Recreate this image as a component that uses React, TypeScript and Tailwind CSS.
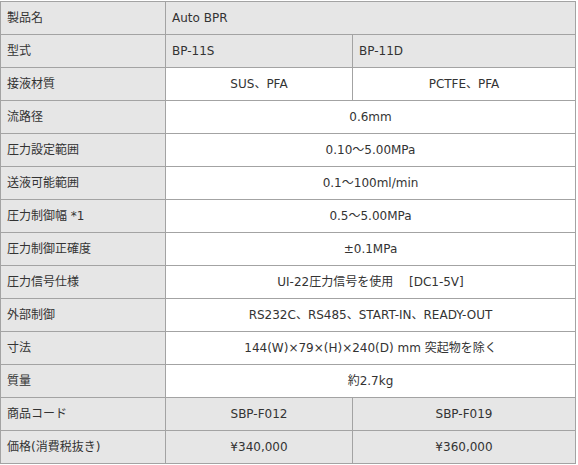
type SpecRow = {
  label: string;
  values: string[];
  gray?: boolean;
  align?: "left" | "center";
};

const rows: SpecRow[] = [
  { label: "製品名", values: ["Auto BPR"], gray: true, align: "left" },
  { label: "型式", values: ["BP-11S", "BP-11D"], gray: true, align: "left" },
  { label: "接液材質", values: ["SUS、PFA", "PCTFE、PFA"] },
  { label: "流路径", values: ["0.6mm"] },
  { label: "圧力設定範囲", values: ["0.10～5.00MPa"] },
  { label: "送液可能範囲", values: ["0.1～100ml/min"] },
  { label: "圧力制御幅 *1", values: ["0.5～5.00MPa"] },
  { label: "圧力制御正確度", values: ["±0.1MPa"] },
  { label: "圧力信号仕様", values: ["UI-22圧力信号を使用　 [DC1-5V]"] },
  { label: "外部制御", values: ["RS232C、RS485、START-IN、READY-OUT"] },
  { label: "寸法", values: ["144(W)×79×(H)×240(D) mm 突起物を除く"] },
  { label: "質量", values: ["約2.7kg"] },
  { label: "商品コード", values: ["SBP-F012", "SBP-F019"], gray: true },
  { label: "価格(消費税抜き)", values: ["¥340,000", "¥360,000"], gray: true },
];

export default function App() {
  return (
    <div className="min-h-screen bg-white pt-px font-['DejaVu_Sans','Noto_Sans_CJK_JP',sans-serif] text-[12px] text-[#333333]">
      <div className="grid w-[576px] grid-cols-[164px_186px_222px] gap-px bg-[#a3a3a3] p-px">
        {rows.map((row) => (
          <div key={row.label} className="contents">
            <div className="flex h-[32px] items-center bg-[#e6e6e6] px-[6px]">
              {row.label}
            </div>
            {row.values.map((value, i) => (
              <div
                key={i}
                className={`flex h-[32px] items-center whitespace-pre ${
                  row.values.length === 1 ? "col-span-2" : ""
                } ${row.gray ? "bg-[#e6e6e6]" : "bg-white"} ${
                  row.align === "left" ? "justify-start px-[6px]" : "justify-center"
                }`}
              >
                {value}
              </div>
            ))}
          </div>
        ))}
      </div>
    </div>
  );
}
